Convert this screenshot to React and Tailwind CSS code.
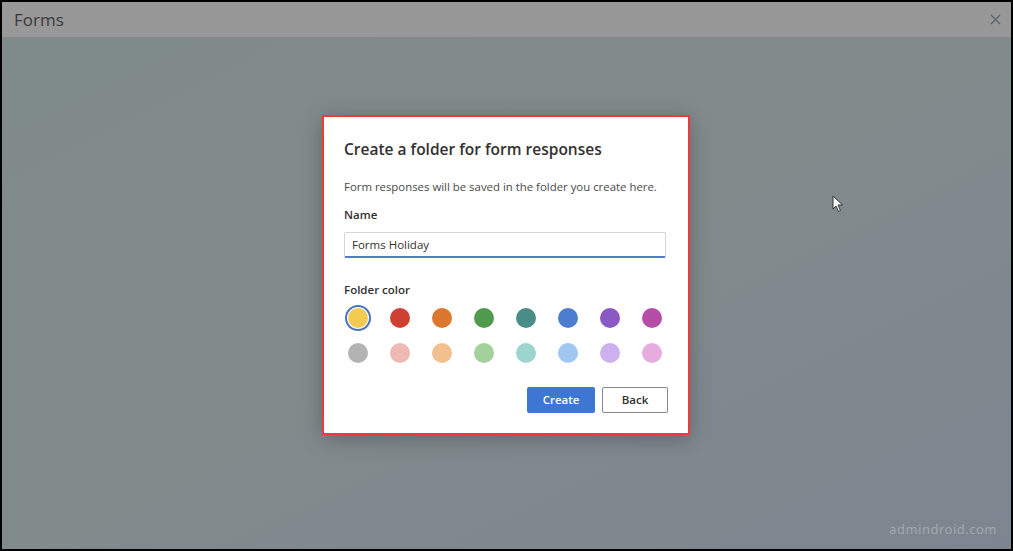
import React, { useState } from 'react'

const colors = [
  '#f3cb52', '#cf4030', '#dc772f', '#4f9a4c', '#4a8d86', '#4b7ecf', '#8a59c3', '#b64ea7',
  '#b3b3b3', '#edbab3', '#f2c08f', '#a2d19b', '#9dd4ce', '#a0c7f1', '#ccb1ee', '#e7ade1',
]

const Cursor = () => (
  <svg width="12" height="18" viewBox="0 0 12 18" className="absolute left-[830px] top-[193px]">
    <path d="M1 1 L1 14 L4 11 L6.5 16.5 L8.5 15.5 L6 10 L10.5 10 Z" fill="#ffffff" stroke="#333333" strokeWidth="1" />
  </svg>
)

const App = () => {
  const [selected, setSelected] = useState(0)
  const [name, setName] = useState('Forms Holiday')

  return (
    <div className="relative w-[1013px] h-[551px] border-2 border-black flex flex-col overflow-hidden font-['Open_Sans',sans-serif]">
      <div className="h-[35px] bg-[#989898] flex items-center justify-between pl-3 pr-[10px] shrink-0">
        <span className="text-[17px] text-[#3b3b3b] leading-none">Forms</span>
        <svg width="11" height="11" viewBox="0 0 11 11">
          <path d="M1 1 L10 10 M10 1 L1 10" stroke="#5b6470" strokeWidth="1.4" />
        </svg>
      </div>

      <div className="flex-1 bg-gradient-to-br from-[#7f8b88] via-[#818b8c] to-[#7d8590] flex justify-center pt-[78px]">
        <div className="w-[368px] h-[320px] -ml-[1px] border-2 border-[#ee3a3a] bg-white shadow-[0_4px_20px_rgba(0,0,0,0.25)] pl-[20px] pr-[20px] pt-[20px]">
          <h2 className="text-[15.5px] font-semibold text-[#323130] leading-[24px]">Create a folder for form responses</h2>
          <p className="mt-[18px] text-[11.4px] text-[#4a4a4a] leading-[16px]">Form responses will be saved in the folder you create here.</p>
          <label className="block mt-[12px] text-[11.5px] font-semibold text-[#323130] leading-[16px]">Name</label>
          <input
            value={name}
            onChange={(e) => setName(e.target.value)}
            className="mt-[9px] w-[322px] h-[26px] border border-[#d6d6d6] border-b-2 border-b-[#4f7cc3] rounded-[2px] px-[7px] text-[11.5px] text-[#323130] outline-none"
          />
          <div className="mt-[24px] text-[11.5px] font-semibold text-[#323130] leading-[16px]">Folder color</div>
          <div className="mt-[7px] grid grid-cols-8 gap-y-[9px] w-[336px]">
            {colors.map((c, i) => (
              <button
                key={i}
                onClick={() => setSelected(i)}
                className="w-[26px] h-[26px] rounded-full flex items-center justify-center ml-[1px]"
                style={i === selected ? { boxShadow: 'inset 0 0 0 2px #4a72c2' } : undefined}
              >
                <span className="block w-[20px] h-[20px] rounded-full" style={{ backgroundColor: c }} />
              </button>
            ))}
          </div>
          <div className="mt-[21px] flex justify-end gap-[7px]">
            <button className="w-[68px] h-[26px] bg-[#3e77d3] text-white text-[11.5px] font-semibold rounded-[2px]">Create</button>
            <button className="w-[66px] h-[26px] bg-white border border-[#8a8a8a] text-[#323130] text-[11.5px] font-semibold rounded-[2px]">Back</button>
          </div>
        </div>
      </div>

      <Cursor />
      <div className="absolute right-[14px] bottom-[10px] text-[13px] tracking-[0.5px] text-[#a3a8ad] font-['Noto_Sans',sans-serif]">admindroid.com</div>
    </div>
  )
}

export default App
